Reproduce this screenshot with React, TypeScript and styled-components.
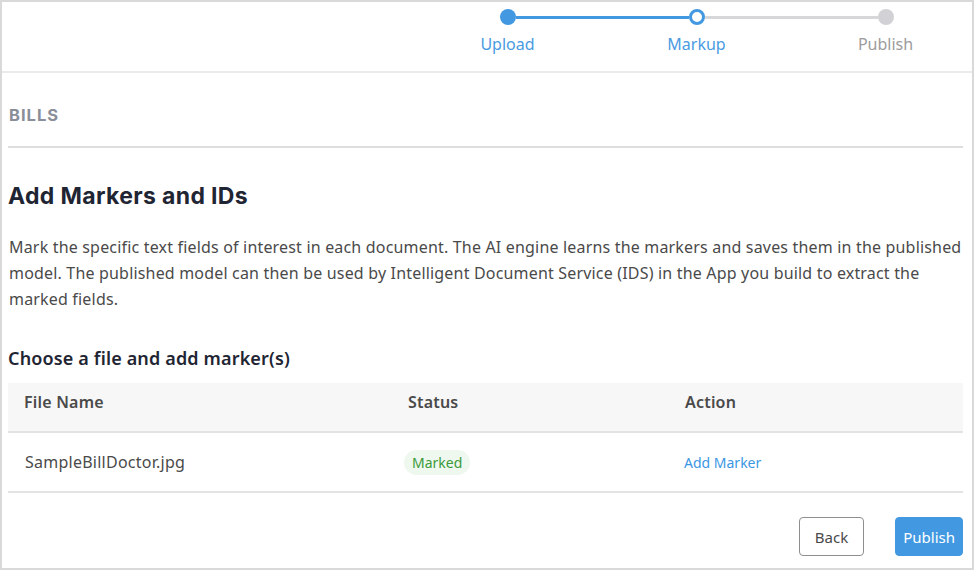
import React from "react";
import styled, { createGlobalStyle } from "styled-components";

const Global = createGlobalStyle`
  html, body { margin: 0; padding: 0; background: #fff; }
  * { box-sizing: border-box; }
`;

const Frame = styled.div`
  width: 974px;
  height: 570px;
  border: 2px solid #d9d9d9;
  background: #fff;
  display: flex;
  flex-direction: column;
  overflow: hidden;
  font-family: "Noto Sans", sans-serif;
`;

const Header = styled.header`
  height: 71px;
  border-bottom: 2px solid #ebebeb;
  flex-shrink: 0;
  overflow: hidden;
`;

const Stepper = styled.ol`
  list-style: none;
  margin: 0 0 0 411px;
  padding: 0;
  display: flex;
  width: 567px;
`;

const Step = styled.li`
  width: 189px;
  flex-shrink: 0;
  display: flex;
  flex-direction: column;
  align-items: center;
`;

const Track = styled.div`
  width: 100%;
  height: 30px;
  display: flex;
  align-items: center;
`;

const Segment = styled.span<{ $color: string }>`
  flex: 1;
  height: 3px;
  background: ${(p) => p.$color};
`;

const Dot = styled.span<{ $state: "done" | "current" | "todo" }>`
  width: 16px;
  height: 16px;
  border-radius: 50%;
  flex-shrink: 0;
  background: ${(p) =>
    p.$state === "done" ? "#4299e1" : p.$state === "current" ? "#fff" : "#d2d2d6"};
  border: ${(p) => (p.$state === "current" ? "3px solid #4299e1" : "none")};
`;

const StepLabel = styled.span<{ $active: boolean }>`
  font-size: 16px;
  line-height: 22px;
  margin-top: 1px;
  color: ${(p) => (p.$active ? "#4a9be2" : "#9c9c9c")};
`;

const Content = styled.main`
  padding: 0 9px 0 6px;
  display: flex;
  flex-direction: column;
`;

const Section = styled.div`
  height: 75px;
  display: flex;
  align-items: center;
  border-bottom: 2px solid #dedede;
  padding-top: 10px;
`;

const SectionTitle = styled.h3`
  margin: 0;
  font-family: Inter, sans-serif;
  font-weight: 700;
  font-size: 16.5px;
  letter-spacing: 1px;
  color: #898e98;
  padding-left: 1px;
`;

const Title = styled.h1`
  margin: 34px 0 0;
  font-family: Inter, sans-serif;
  font-weight: 700;
  font-size: 23px;
  letter-spacing: 0.35px;
  line-height: 28px;
  color: #1f2533;
`;

const Para = styled.p`
  margin: 24px 0 0;
  font-size: 16px;
  letter-spacing: 0.18px;
  line-height: 26px;
  color: #4a4a4a;
  padding-left: 1px;
`;

const SubTitle = styled.h2`
  margin: 34px 0 0;
  font-size: 18px;
  letter-spacing: 0.15px;
  font-weight: 600;
  line-height: 24px;
  color: #1f2533;
`;

const Table = styled.div`
  margin-top: 13px;
  display: flex;
  flex-direction: column;
`;

const Row = styled.div<{ $head?: boolean }>`
  display: grid;
  grid-template-columns: 384px 277px 1fr;
  align-items: center;
  height: ${(p) => (p.$head ? "50px" : "60px")};
  background: ${(p) => (p.$head ? "#f7f7f7" : "#fff")};
  border-bottom: 2px solid #e3e3e3;
  padding-left: 16px;
`;

const HeadCell = styled.div`
  font-size: 16px;
  letter-spacing: 0.2px;
  font-weight: 600;
  color: #4a4a4a;
  padding-bottom: 10px;
`;

const Cell = styled.div`
  font-size: 16px;
  letter-spacing: 0.25px;
  color: #4a4a4a;
  padding-left: 1px;
`;

const Badge = styled.span`
  display: inline-flex;
  align-items: center;
  height: 25px;
  padding: 0 8px;
  margin-left: -5px;
  border-radius: 13px;
  background: #eef8ee;
  color: #3c9a3c;
  font-size: 14px;
  letter-spacing: 0;
`;

const LinkButton = styled.a`
  font-size: 14px;
  letter-spacing: 0;
  color: #3b97e3;
  cursor: pointer;
  margin-left: -2px;
  padding-top: 2px;
`;

const Footer = styled.div`
  display: flex;
  justify-content: flex-end;
  gap: 31px;
  margin-top: 24px;
`;

const Button = styled.button<{ $primary?: boolean }>`
  height: 39px;
  padding: 0 ${(p) => (p.$primary ? "7px" : "15px")};
  border-radius: 4px;
  font-family: "Noto Sans", sans-serif;
  font-size: 15px;
  border: 1px solid ${(p) => (p.$primary ? "#4299e1" : "#8e8e8e")};
  background: ${(p) => (p.$primary ? "#4299e1" : "#fff")};
  color: ${(p) => (p.$primary ? "#fff" : "#4a4a4a")};
`;

const steps: { label: string; state: "done" | "current" | "todo" }[] = [
  { label: "Upload", state: "done" },
  { label: "Markup", state: "current" },
  { label: "Publish", state: "todo" },
];

export default function App() {
  return (
    <>
      <Global />
      <Frame>
        <Header>
          <Stepper>
            {steps.map((s, i) => (
              <Step key={s.label}>
                <Track>
                  <Segment
                    $color={i === 0 ? "transparent" : i <= 1 ? "#4299e1" : "#d7d7da"}
                  />
                  <Dot $state={s.state} />
                  <Segment
                    $color={
                      i === steps.length - 1 ? "transparent" : i === 0 ? "#4299e1" : "#d7d7da"
                    }
                  />
                </Track>
                <StepLabel $active={s.state !== "todo"}>{s.label}</StepLabel>
              </Step>
            ))}
          </Stepper>
        </Header>
        <Content>
          <Section>
            <SectionTitle>BILLS</SectionTitle>
          </Section>
          <Title>Add Markers and IDs</Title>
          <Para>
            Mark the specific text fields of interest in each document. The AI engine learns the
            markers and saves them in the published model. The published model can then be used by
            Intelligent Document Service (IDS) in the App you build to extract the marked fields.
          </Para>
          <SubTitle>Choose a file and add marker(s)</SubTitle>
          <Table>
            <Row $head>
              <HeadCell>File Name</HeadCell>
              <HeadCell>Status</HeadCell>
              <HeadCell>Action</HeadCell>
            </Row>
            <Row>
              <Cell>SampleBillDoctor.jpg</Cell>
              <Cell>
                <Badge>Marked</Badge>
              </Cell>
              <Cell>
                <LinkButton>Add Marker</LinkButton>
              </Cell>
            </Row>
          </Table>
          <Footer>
            <Button>Back</Button>
            <Button $primary>Publish</Button>
          </Footer>
        </Content>
      </Frame>
    </>
  );
}
